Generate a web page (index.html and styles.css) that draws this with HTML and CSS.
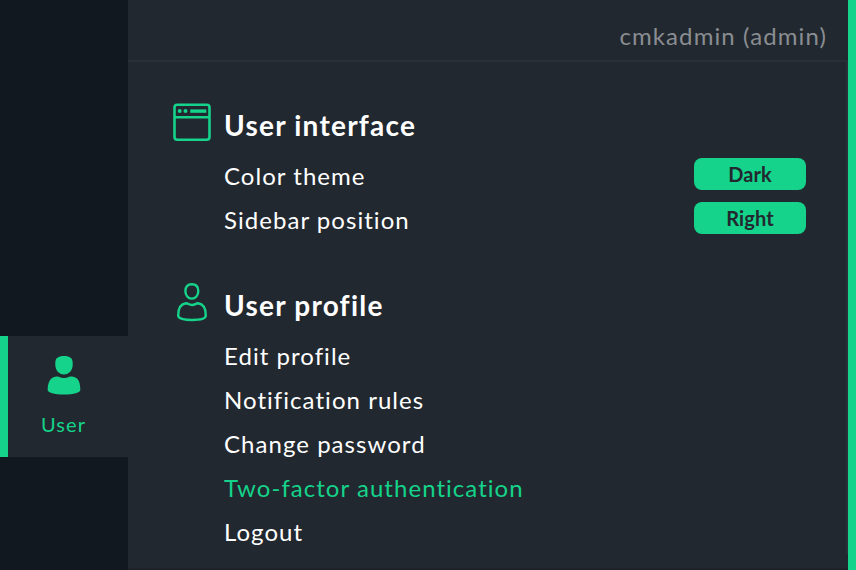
FILE: index.html
```html
<!DOCTYPE html>
<html lang="en">
<head>
<meta charset="utf-8">
<title>User</title>
<link rel="stylesheet" href="styles.css">
</head>
<body>
<div class="app">
  <nav class="sidebar">
    <a class="nav-item">
      <svg class="nav-icon" width="34" height="40" viewBox="0 0 34 40"><path fill="currentColor" d="M17 1C23 1 25.700 3 25.700 8V10C25.700 15 22 19.500 17 19.500S8.300 15 8.300 10V8C8.300 3 11 1 17 1ZM10 21.500C12.500 21.500 13 23 17 23S21.500 21.500 24 21.500C31 22 33.300 26 33.300 35C33.300 37.500 27 39.500 17 39.500S.7 37.500 .7 35C.7 26 4 22 10 21.500Z"/></svg>
      <span>User</span>
    </a>
  </nav>
  <main class="menu">
    <header class="head">cmkadmin (admin)</header>
    <div class="content">
      <section class="topic">
        <h2><svg class="icon" width="40" height="40" viewBox="0 0 40 40" fill="none" stroke="currentColor" stroke-width="2.600"><rect x="2.500" y="2.700" width="35" height="35" rx="2.700"/><path d="M3 15.300H37"/><path stroke-width="3.400" d="M18.200 9.100H34.300"/><g fill="currentColor" stroke="none"><circle cx="7.700" cy="9.100" r="2"/><circle cx="13.500" cy="9.100" r="2"/></g></svg>User interface</h2>
        <ul>
          <li>Color theme<button>Dark</button></li>
          <li>Sidebar position<button>Right</button></li>
        </ul>
      </section>
      <section class="topic">
        <h2><svg class="icon" width="40" height="40" viewBox="0 0 40 40" fill="none" stroke="currentColor" stroke-width="2.400"><path d="M19.800 2.300C24.300 2.300 26.300 4.800 26.300 9C26.300 13.500 23.500 16.600 19.800 16.600S13.400 13.500 13.400 9C13.400 4.800 15.500 2.300 19.800 2.300ZM14 21.300C16.500 21.300 16.700 23 19.900 23S23.500 21.300 26 21.300C31.500 22 33.800 25.500 33.800 33.500C33.800 36.500 28 38 20 38S6.200 36.500 6.200 33.500C6.200 25.500 8.500 22 14 21.300Z"/></svg>User profile</h2>
        <ul>
          <li>Edit profile</li>
          <li>Notification rules</li>
          <li>Change password</li>
          <li class="active">Two-factor authentication</li>
          <li>Logout</li>
        </ul>
      </section>
      <div class="scrollbar"></div>
    </div>
  </main>
</div>
</body>
</html>
```
FILE: styles.css
```css
* { box-sizing: border-box; }
body { margin: 0; font-family: Lato, sans-serif; color: #fff; background: #22282f; }
.app { display: flex; height: 570px; overflow: hidden; }
.sidebar { width: 128px; background: #11181f; padding-top: 336px; }
.nav-item { display: flex; flex-direction: column; align-items: center; height: 121px; padding: 19px 9px 0 0; border-left: 8px solid #15d38a; background: #22282f; color: #15d38a; font-size: 20px; line-height: 24px; letter-spacing: 1.1px; }
.nav-icon { margin-bottom: 17px; }
.menu { flex: 1; border-right: 8px solid #15d38a; }
.head { height: 62px; padding: 21px 21px 0 0; border-bottom: 2px solid #282f39; text-align: right; color: #8a8d91; font-size: 24px; line-height: 30px; letter-spacing: 1.1px; }
.content { position: relative; height: 508px; border-bottom: 2px solid #202229; }
.scrollbar { position: absolute; top: 0; right: 0; width: 2px; height: 492px; background: #2a2f39; }
.topic { height: 180px; padding: 38px 42px 0 44px; }
h2 { display: flex; align-items: center; height: 50px; margin: 0; font-size: 28px; font-weight: 700; letter-spacing: 1.23px; }
.icon { margin: -6px 12px 0 0; color: #15d38a; }
ul { margin: 3px 0 0; padding: 0 0 0 52px; list-style: none; }
li { display: flex; justify-content: space-between; align-items: center; height: 44px; font-size: 24px; letter-spacing: 1.04px; white-space: nowrap; }
button { width: 112px; height: 32px; margin-top: -2px; padding: 0; border: 0; border-radius: 8px; background: #15d38a; color: #22282f; font: 700 20px Lato, sans-serif; letter-spacing: .1px; }
.active { color: #15d38a; }
```
